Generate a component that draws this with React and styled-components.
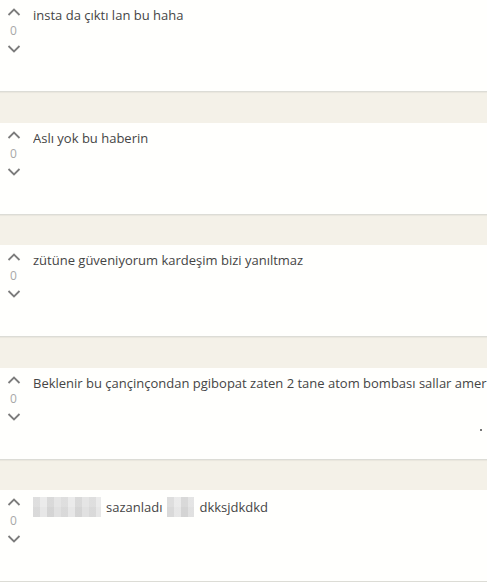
import styled, { createGlobalStyle } from "styled-components";

const GlobalStyle = createGlobalStyle`
  html, body {
    margin: 0;
    padding: 0;
    background: #f4f1e8;
  }
  body {
    font-family: "Open Sans", "Liberation Sans", sans-serif;
    overflow: hidden;
  }
`;

const comments = [
  { text: "insta da çıktı lan bu haha", score: 0 },
  { text: "Aslı yok bu haberin", score: 0 },
  { text: "zütüne güveniyorum kardeşim bizi yanıltmaz", score: 0 },
  {
    text: "Beklenir bu çançinçondan pgibopat zaten 2 tane atom bombası sallar amerikaya",
    score: 0,
    dot: true,
  },
  { censored: true, score: 0 },
];

const App = () => {
  return (
    <List>
      <GlobalStyle />
      {comments.map((c, i) => (
        <Card key={i}>
          <Votes>
            <Chevron dir="up" />
            <Score>{c.score}</Score>
            <Chevron dir="down" />
          </Votes>
          <Body>
            {c.censored ? (
              <Line>
                <Blur w={68} />
                <span>sazanladı</span>
                <Blur w={27} />
                <span>dkksjdkdkd</span>
              </Line>
            ) : (
              <Text>{c.text}</Text>
            )}
          </Body>
          {c.dot && <Dot />}
        </Card>
      ))}
    </List>
  );
};

const Chevron = ({ dir }) => (
  <svg width="14" height="8" viewBox="0 0 14 8">
    <path
      d={dir === "up" ? "M1.5 7 L7 1.6 L12.5 7" : "M1.5 1 L7 6.4 L12.5 1"}
      fill="none"
      stroke="#7c7c7c"
      strokeWidth="1.8"
    />
  </svg>
);

const List = styled.div`
  display: flex;
  flex-direction: column;
  gap: 30.5px;
`;

const Card = styled.div`
  position: relative;
  display: flex;
  height: 91px;
  background: #fffffd;
  border-bottom: 1px solid #dcdcd6;
  box-shadow: 0 1px 1px rgba(0, 0, 0, 0.04);
`;

const Votes = styled.div`
  width: 25px;
  display: flex;
  flex-direction: column;
  align-items: center;
  padding-top: 8px;
  padding-left: 1px;
  gap: 7px;
`;

const Score = styled.div`
  font-size: 12px;
  line-height: 15px;
  color: #a8a8a8;
`;

const Body = styled.div`
  flex: 1;
  padding: 6px 0 0 7px;
  min-width: 0;
`;

const Text = styled.div`
  font-size: 13px;
  line-height: 18px;
  color: #454545;
  white-space: nowrap;
  overflow: hidden;
`;

const Line = styled.div`
  display: flex;
  align-items: center;
  gap: 5px;
  font-size: 13px;
  line-height: 18px;
  color: #454545;
  margin-top: 1px;
`;

const Blur = styled.span`
  display: inline-block;
  width: ${({ w }) => w}px;
  height: 20px;
  background:
    linear-gradient(90deg, rgba(210,210,210,0.5) 0 25%, rgba(235,235,235,0.6) 25% 50%, rgba(200,200,200,0.5) 50% 75%, rgba(225,225,225,0.6) 75%),
    linear-gradient(#eaeaea 0 50%, #e0e0e0 50%);
  background-size: 28px 100%, 100% 100%;
`;

const Dot = styled.span`
  position: absolute;
  right: 5px;
  bottom: 28px;
  width: 2px;
  height: 2px;
  background: #777;
`;

export default App;
